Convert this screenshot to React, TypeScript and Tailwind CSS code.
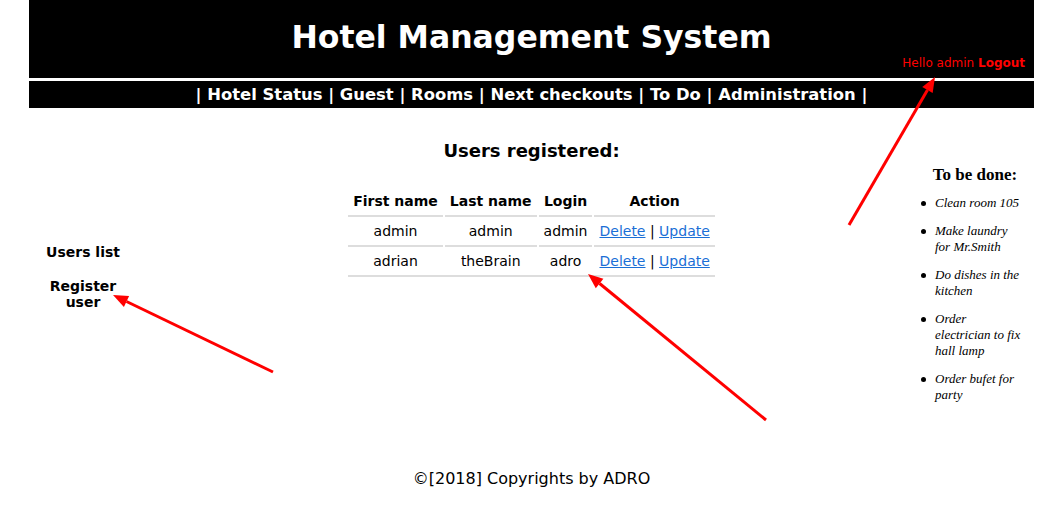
import React from 'react';

const NAV = ['Hotel Status', 'Guest', 'Rooms', 'Next checkouts', 'To Do', 'Administration'];

const USERS = [
  { first: 'admin', last: 'admin', login: 'admin' },
  { first: 'adrian', last: 'theBrain', login: 'adro' },
];

const TODO = ['Clean room 105', 'Make laundry for Mr.Smith', 'Do dishes in the kitchen', 'Order electrician to fix hall lamp', 'Order bufet for party'];

// annotation arrows: [tailX, tailY, tipX, tipY]
const ARROWS = [
  [849, 225, 935, 77],
  [273, 372, 113, 295],
  [766, 420, 588, 274],
];

function Arrow({ a }: { a: number[] }) {
  const [x1, y1, x2, y2] = a;
  const dx = x2 - x1;
  const dy = y2 - y1;
  const len = Math.hypot(dx, dy);
  const ux = dx / len;
  const uy = dy / len;
  const hl = 15;
  const hw = 6;
  const bx = x2 - ux * hl;
  const by = y2 - uy * hl;
  const pts = `${x2},${y2} ${bx - uy * hw},${by + ux * hw} ${bx + uy * hw},${by - ux * hw}`;
  return (
    <g>
      <line x1={x1} y1={y1} x2={bx} y2={by} stroke="#ff0000" strokeWidth={3} />
      <polygon points={pts} fill="#ff0000" />
    </g>
  );
}

export default function App() {
  return (
    <div className="relative w-[1050px] h-[508px] bg-white overflow-hidden font-['DejaVu_Sans',sans-serif] text-black">
      <div className="ml-[29px] w-[1005px]">
        {/* Header */}
        <div className="relative h-[78px] bg-black flex items-center justify-center">
          <h1 className="text-[31.5px] font-bold text-white leading-none -mt-[2px]">Hotel Management System</h1>
          <div className="absolute right-[9px] top-[54px] text-[12px] text-[#ff0000]">
            Hello admin <span className="font-bold">Logout</span>
          </div>
        </div>
        <div className="h-[3px] bg-white" />
        <div className="h-[27px] bg-black flex items-center justify-center text-white font-bold text-[16.4px] pt-[1px]">
          {`| ${NAV.join(' | ')} |`}
        </div>

        {/* Body */}
        <div className="flex h-[340px]">
          <div className="w-[108px] pt-[136px] flex flex-col items-center text-[14px] font-bold text-center leading-[16px]">
            <div>Users list</div>
            <div className="mt-[18px] w-[80px]">Register user</div>
          </div>

          <div className="flex-1 flex flex-col items-center pt-[31px]">
            <h2 className="text-[18px] font-bold leading-[24px]">Users registered:</h2>
            <table className="mt-[24px] border-separate border-spacing-[2px] text-[14px]">
              <thead>
                <tr>
                  {['First name', 'Last name', 'Login', 'Action'].map((h) => (
                    <th key={h} className="px-[5px] h-[24px] font-bold">{h}</th>
                  ))}
                </tr>
              </thead>
              <tbody>
                {USERS.map((u) => (
                  <tr key={u.login}>
                    <td className="px-[5px] h-[28px] text-center border-t-2 border-[#dddddd] pt-[2px]">{u.first}</td>
                    <td className="px-[5px] h-[28px] text-center border-t-2 border-[#dddddd] pt-[2px]">{u.last}</td>
                    <td className="px-[5px] h-[28px] text-center border-t-2 border-[#dddddd] pt-[2px]">{u.login}</td>
                    <td className="px-[5px] h-[28px] text-center border-t-2 border-[#dddddd] pt-[2px]">
                      <a href="#" className="text-[#1a6fd6] underline">Delete</a> | <a href="#" className="text-[#1a6fd6] underline">Update</a>
                    </td>
                  </tr>
                ))}
                <tr>
                  <td colSpan={4} className="p-0 h-[2px] border-t-2 border-[#dddddd]" />
                </tr>
              </tbody>
            </table>
          </div>

          <div className="w-[108px]">
            <div className="w-[118px] -ml-[10px] pt-[57px] font-['Liberation_Serif',serif]">
              <h3 className="text-[17px] font-bold text-center leading-[20px]">To be done:</h3>
              <ul className="mt-[10px] pl-[19px] text-[13px] italic leading-[16px]">
                {TODO.map((t) => (
                  <li key={t} className="relative mb-[12px] w-[88px]">
                    <span className="absolute -left-[14px] top-[6px] w-[5px] h-[5px] rounded-full bg-black" />
                    {t}
                  </li>
                ))}
              </ul>
            </div>
          </div>
        </div>

        <div className="text-center text-[16px] mt-[19px]">©[2018] Copyrights by ADRO</div>
      </div>

      <svg className="absolute inset-0 pointer-events-none" width={1050} height={508}>
        {ARROWS.map((a, i) => <Arrow key={i} a={a} />)}
      </svg>
    </div>
  );
}
